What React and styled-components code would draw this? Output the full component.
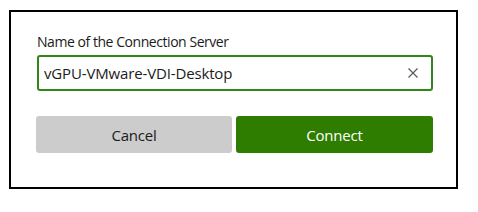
import React from "react";
import styled, { createGlobalStyle } from "styled-components";

const Global = createGlobalStyle`
  html, body { margin: 0; padding: 0; background: #ffffff; }
  body { font-family: "Open Sans", "Noto Sans", Arial, sans-serif; }
`;

const Page = styled.div`
  padding: 10px 0 0 9px;
`;

const Dialog = styled.div`
  box-sizing: border-box;
  width: 449px;
  height: 179px;
  border: 2px solid #000;
  padding: 20px 23px 0 25px;
  display: flex;
  flex-direction: column;
`;

const Label = styled.label`
  font-size: 14px;
  line-height: 20px;
  letter-spacing: -0.45px;
  color: #1b1b1b;
  margin-bottom: 3px;
  padding-left: 1px;
`;

const Field = styled.div`
  box-sizing: border-box;
  height: 36px;
  margin-left: 1px;
  border: 2px solid #33851a;
  border-radius: 3px;
  display: flex;
  align-items: center;
  padding: 0 10px 0 5px;
`;

const Input = styled.input`
  flex: 1;
  border: none;
  outline: none;
  background: transparent;
  font-family: inherit;
  font-size: 15px;
  letter-spacing: -0.15px;
  color: #1b1b1b;
  padding: 0;
`;

const Clear = styled.button`
  border: none;
  background: transparent;
  padding: 0;
  width: 16px;
  height: 16px;
  display: flex;
  align-items: center;
  justify-content: center;
  cursor: pointer;
`;

const Actions = styled.div`
  display: grid;
  grid-template-columns: 196px 197px;
  gap: 4px;
  margin-top: 25px;
`;

const Button = styled.button`
  height: 37px;
  border: none;
  border-radius: 3px;
  font-family: inherit;
  font-size: 15px;
  letter-spacing: -0.2px;
  background: ${(p) => (p.$primary ? "#2e7d00" : "#cccccc")};
  color: ${(p) => (p.$primary ? "#ffffff" : "#1b1b1b")};
  cursor: pointer;
`;

export default function App() {
  return (
    <>
      <Global />
      <Page>
        <Dialog>
          <Label>Name of the Connection Server</Label>
          <Field>
            <Input defaultValue="vGPU-VMware-VDI-Desktop" />
            <Clear aria-label="Clear">
              <svg width="10" height="10" viewBox="0 0 10 10">
                <path d="M0.5 0.5 L9.5 9.5 M9.5 0.5 L0.5 9.5" stroke="#555" strokeWidth="1.1" fill="none" />
              </svg>
            </Clear>
          </Field>
          <Actions>
            <Button>Cancel</Button>
            <Button $primary>Connect</Button>
          </Actions>
        </Dialog>
      </Page>
    </>
  );
}
